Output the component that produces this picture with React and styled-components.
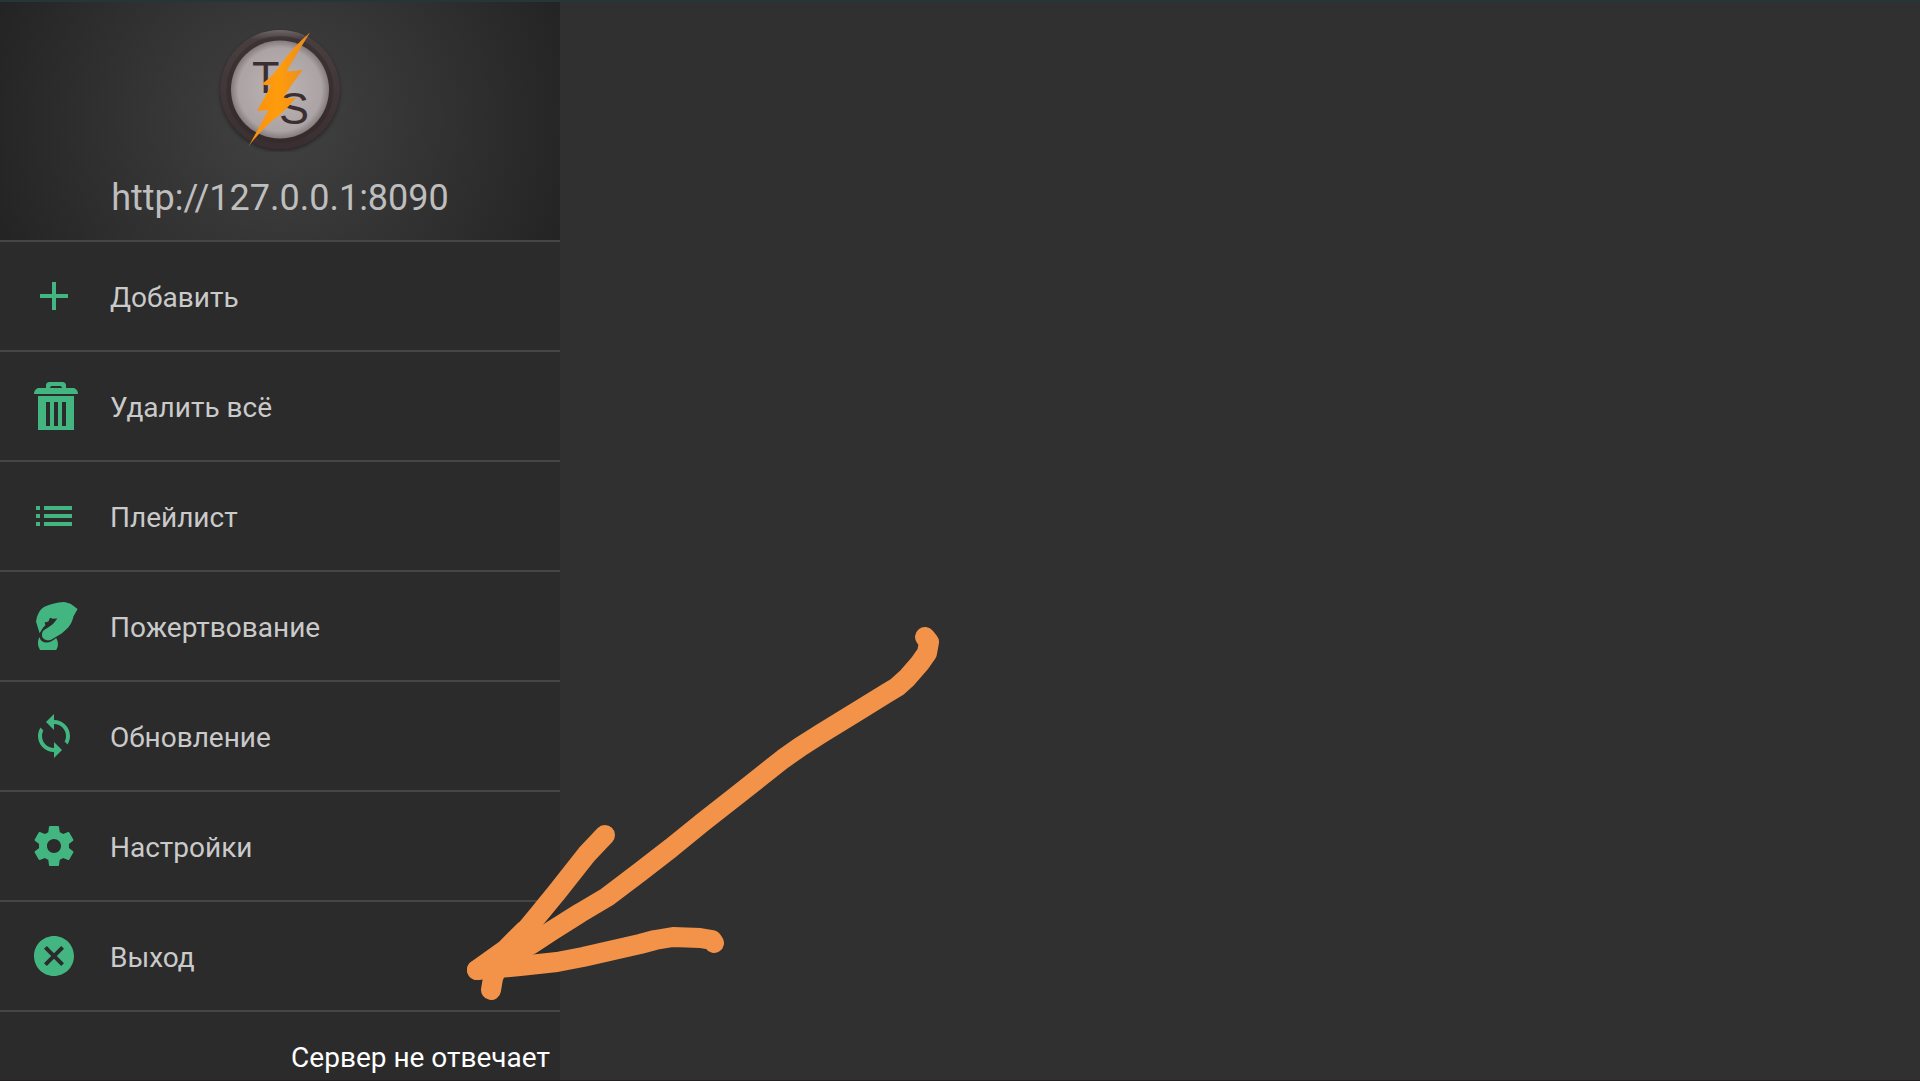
import React from "react";
import styled, { createGlobalStyle } from "styled-components";

const GlobalStyle = createGlobalStyle`
  *, *::before, *::after { box-sizing: border-box; }
  body {
    margin: 0;
    background: #303030;
    font-family: Roboto, "Noto Sans", sans-serif;
  }
`;

const Screen = styled.div`
  position: relative;
  display: flex;
  min-height: 100vh;
  overflow: hidden;
  background: #303030;
  border-bottom: 1px solid #241f21;

  &::before {
    content: "";
    position: absolute;
    inset: 0 0 auto 0;
    height: 2px;
    background: #263536;
    z-index: 1;
  }
`;

const Drawer = styled.aside`
  display: flex;
  flex-direction: column;
  flex: 0 0 560px;
  background: #2b2b2b;
`;

const Header = styled.header`
  display: flex;
  flex-direction: column;
  align-items: center;
  gap: 24px;
  padding: 28px 16px 20px;
  border-bottom: 2px solid #464646;
  background: radial-gradient(circle 310px at 50% 50%, #424242, #232323);
`;

const Logo = styled.svg`
  display: block;
  width: 128px;
  height: 124px;
`;

const LogoLetter = styled.text`
  font-family: "Liberation Sans", sans-serif;
  font-size: 45px;
  fill: #3b2e30;
`;

const Address = styled.a`
  color: #bebebe;
  font-size: 36px;
  line-height: 44px;
  text-decoration: none;
`;

const Menu = styled.nav`
  display: flex;
  flex-direction: column;
`;

const MenuButton = styled.button`
  display: flex;
  align-items: center;
  gap: 32px;
  height: 110px;
  padding: 0 30px;
  border: 0;
  border-bottom: 2px solid #464646;
  background: transparent;
  color: #cacaca;
  font: inherit;
  font-size: 28px;
  line-height: 36px;
  text-align: left;
  cursor: pointer;
`;

const MenuLabel = styled.span`
  padding-top: 4px;
`;

const Glyph = styled.svg`
  flex: none;
  width: 48px;
  height: 48px;
  overflow: visible;
  fill: #43b581;
`;

const Status = styled.p`
  margin: 0;
  padding: 28px 10px 0;
  color: #fff;
  font-size: 28px;
  line-height: 36px;
  text-align: right;
`;

const Content = styled.main`
  flex: 1;
`;

const Arrow = styled.svg`
  position: absolute;
  left: 460px;
  top: 620px;
  width: 490px;
  height: 390px;
  fill: none;
  stroke: #f39249;
  stroke-width: 20px;
  stroke-linecap: round;
  stroke-linejoin: round;
  pointer-events: none;
`;

const items = [
  {
    label: "Добавить",
    icon: <path d="M19 13h-6v6h-2v-6H5v-2h6V5h2v6h6v2z" />,
  },
  {
    label: "Удалить всё",
    icon: (
      <path
        fillRule="evenodd"
        d="M8 3V1.8Q8 0 9.8 0h6.400Q18 0 18 1.800V3h4q2 .8 2 3H2q0-2.200 2-3zm2 0h6q0-1-1-1h-4q-1 0-1 1zM4 7h18v17H4zm4 3v12h2V10zm4 0v12h2V10zm4 0v12h2V10z"
      />
    ),
  },
  {
    label: "Плейлист",
    icon: (
      <path d="M3 13h2v-2H3v2zm0 4h2v-2H3v2zm0-8h2V7H3v2zm4 4h14v-2H7v2zm0 4h14v-2H7v2zM7 7v2h14V7H7z" />
    ),
  },
  {
    label: "Пожертвование",
    icon: (
      <>
        <path d="M4.800 15.600L3 9.800C3.300 8 3.600 6.800 4.200 5.700 5 4.200 6 3 7.500 2.300 10.500 1 13.500 .2 16.700 0c1.500.2 2.900.6 4.100 1.200L23.800 3.500 21.700 7.300C21.300 9 20.900 10.300 20 11.500c-1.200 1.700-2.600 3-4.200 4.200L10.800 18.700C9.800 19.200 8.800 19.300 8 19 6.800 18.600 6.100 17.900 6 16.900c-.1-1 .1-1.900.8-2.600C8 13.200 9.700 12.500 11 11.400c.9-.8 1.400-1.500 1.900-2.200L13.700 8.200 11.500 8.400 10 7.900 9.200 9.800 7.300 10.300 7.700 11.600 6.600 12.700z" />
        <path d="M4.700 17.500C5.200 19.300 6.500 20.300 8.300 20.300c1.700 0 3.300-1 4.800-2.300 1.200 2 1.200 4.200 0 6H5c-1.300-2-1.400-4.400-.3-6.500z" />
      </>
    ),
  },
  {
    label: "Обновление",
    icon: (
      <path d="M12 4V1L8 5l4 4V6c3.310 0 6 2.690 6 6 0 1.010-.25 1.970-.7 2.800l1.460 1.460C19.540 15.030 20 13.570 20 12c0-4.420-3.580-8-8-8zm0 14c-3.310 0-6-2.690-6-6 0-1.010.25-1.970.7-2.800L5.240 7.740C4.460 8.970 4 10.430 4 12c0 4.420 3.580 8 8 8v3l4-4-4-4v3z" />
    ),
  },
  {
    label: "Настройки",
    icon: (
      <path d="M19.430 12.980c.04-.32.07-.64.07-.98s-.03-.66-.07-.98l2.110-1.650c.19-.15.24-.42.12-.64l-2-3.460c-.12-.22-.39-.3-.61-.22l-2.490 1c-.52-.4-1.080-.73-1.690-.98l-.38-2.650C14.460 2.180 14.250 2 14 2h-4c-.25 0-.46.18-.49.42l-.38 2.650c-.61.25-1.170.59-1.690.98l-2.490-1c-.23-.09-.49 0-.61.22l-2 3.460c-.13.22-.07.49.12.64l2.110 1.650c-.04.32-.07.65-.07.98s.03.66.07.98l-2.110 1.650c-.19.15-.24.42-.12.64l2 3.460c.12.22.39.3.61.22l2.490-1c.52.4 1.080.73 1.690.98l.38 2.650c.03.24.24.42.49.42h4c.25 0 .46-.18.49-.42l.38-2.650c.61-.25 1.170-.59 1.690-.98l2.490 1c.23.09.49 0 .61-.22l2-3.460c.12-.22.07-.49-.12-.64l-2.110-1.650zM12 15.500c-1.930 0-3.500-1.570-3.500-3.500s1.570-3.500 3.500-3.500 3.500 1.570 3.500 3.500-1.570 3.500-3.500 3.500z" />
    ),
  },
  {
    label: "Выход",
    icon: (
      <path d="M12 2C6.470 2 2 6.470 2 12s4.470 10 10 10 10-4.470 10-10S17.530 2 12 2zm5 13.590L15.590 17 12 13.410 8.410 17 7 15.590 10.590 12 7 8.410 8.410 7 12 10.590 15.590 7 17 8.410 13.410 12 17 15.590z" />
    ),
  },
];

function AppLogo() {
  return (
    <Logo viewBox="0 0 128 124" role="img" aria-label="TS">
      <defs>
        <linearGradient id="rim" x1="0" y1="0" x2="0" y2="1">
          <stop offset="0" stopColor="#6e6667" />
          <stop offset="0.08" stopColor="#483e3f" />
          <stop offset="1" stopColor="#3a2e30" />
        </linearGradient>
        <radialGradient id="face">
          <stop offset="0" stopColor="#bdb4b5" />
          <stop offset="0.85" stopColor="#aca3a4" />
          <stop offset="1" stopColor="#857b7c" />
        </radialGradient>
        <linearGradient id="bolt" x1="0" y1="0" x2="1" y2="0">
          <stop offset="0" stopColor="#f98f10" />
          <stop offset="0.5" stopColor="#ff9c0c" />
          <stop offset="1" stopColor="#e58b20" />
        </linearGradient>
        <filter id="shade" x="-20%" y="-20%" width="140%" height="140%">
          <feDropShadow dx="0" dy="2" stdDeviation="2" floodColor="#000" floodOpacity="0.45" />
        </filter>
      </defs>
      <circle cx="64" cy="61.500" r="59.500" fill="url(#rim)" filter="url(#shade)" />
      <circle cx="64" cy="61.500" r="51" fill="none" stroke="#2f2627" strokeOpacity="0.45" strokeWidth="5" />
      <circle cx="64" cy="61.500" r="49" fill="url(#face)" />
      <LogoLetter x="36" y="65">T</LogoLetter>
      <LogoLetter x="63" y="96">S</LogoLetter>
      <path
        d="M94 4.500 L70.500 43 Q79 44 87 41.500 Q77 54 67.500 69.500 Q74 71 80 69.500 Q69 84 57 92 Q44 103 32.500 118.500 L52.500 82 Q47 83 41 82.500 Q47 73 55 57 Q50 58 46 56 Q58 47 65 36 Q77 19 94 4.500 Z"
        fill="url(#bolt)"
      />
    </Logo>
  );
}

export default function App() {
  return (
    <>
      <GlobalStyle />
      <Screen>
        <Drawer>
          <Header>
            <AppLogo />
            <Address href="http://127.0.0.1:8090">http://127.0.0.1:8090</Address>
          </Header>
          <Menu>
            {items.map(({ label, icon }) => (
              <MenuButton key={label} type="button">
                <Glyph viewBox="0 0 24 24" aria-hidden="true">
                  {icon}
                </Glyph>
                <MenuLabel>{label}</MenuLabel>
              </MenuButton>
            ))}
          </Menu>
          <Status role="status">Сервер не отвечает</Status>
        </Drawer>
        <Content />
        <Arrow viewBox="460 620 490 390" aria-hidden="true">
          <path d="M925 637L929 642L927 653L920 663L907 678L897 687L887 693L853 714L822 733L800 747L783 759L740 793L703 822L671 848L640 872L607 897L580 913L553 930L530 945L505 960L477 970" />
          <path d="M605 835L587 854L572 873L557 892L539 914L520 937L499 963L493 978L491 990" />
          <path d="M714 943L712 940L700 938L673 937L655 940L640 944L583 957L557 962L520 966L477 970L505 950L525 930" />
        </Arrow>
      </Screen>
    </>
  );
}
